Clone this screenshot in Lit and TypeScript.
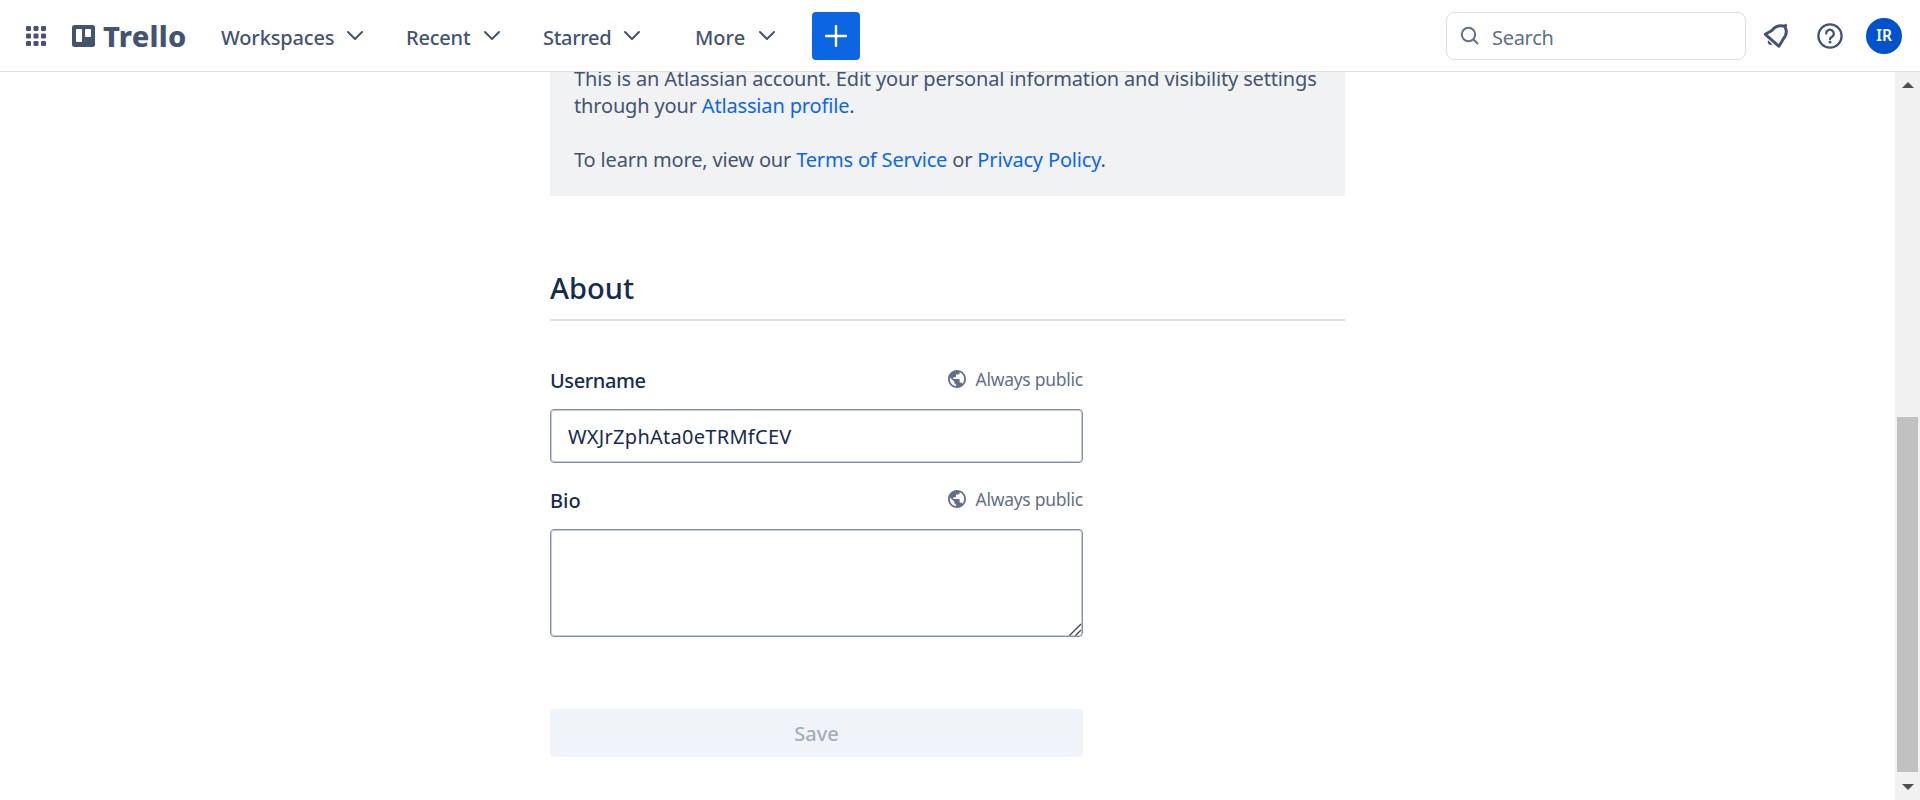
import { LitElement, html, css, svg } from "lit";
import { customElement } from "lit/decorators.js";

const chevron = html`<svg class="chev" viewBox="0 0 18 12" width="18" height="12"><path d="M2 2 L9 9 L16 2" fill="none" stroke="#44546f" stroke-width="2" stroke-linecap="round" stroke-linejoin="round"/></svg>`;

const globe = html`<svg class="globe" viewBox="2 2 20 20" width="18" height="18"><path fill="#626f86" d="M12 2C6.48 2 2 6.48 2 12s4.48 10 10 10 10-4.48 10-10S17.52 2 12 2zm-1 17.93c-3.95-.49-7-3.85-7-7.93 0-.62.08-1.21.21-1.79L9 15v1c0 1.1.9 2 2 2v1.93zm6.9-2.54c-.26-.81-1-1.39-1.9-1.39h-1v-3c0-.55-.45-1-1-1H8v-2h2c.55 0 1-.45 1-1V7h2c1.1 0 2-.9 2-2v-.41c2.93 1.19 5 4.06 5 7.41 0 2.08-.8 3.97-2.1 5.39z"/></svg>`;

@customElement("app-root")
export class AppRoot extends LitElement {
  static styles = css`
    :host { display: flex; flex-direction: column; width: 1920px; height: 800px; overflow: hidden; background: #fff; color: #172b4d; font: 20px/27px "Noto Sans", "Open Sans", sans-serif; box-sizing: border-box; }
    * { box-sizing: border-box; }
    svg { display: block; flex: none; }
    header { display: flex; align-items: center; height: 72px; flex: none; border-bottom: 1px solid #dcdfe4; padding: 0 18px 0 26px; color: #44546f; }
    .logo { display: flex; align-items: center; margin-left: 26px; width: 149px; }
    .word { font-size: 29px; font-weight: 800; line-height: 40px; margin: 1px 0 0 8px; letter-spacing: 0.25px; }
    nav { display: flex; align-items: center; font-weight: 500; }
    .item { display: flex; align-items: center; justify-content: space-between; white-space: nowrap; padding-top: 3px; }
    .chev { margin-top: -2px; }
    .workspaces { width: 143px; margin-right: 42px; letter-spacing: -0.15px; }
    .recent { width: 95px; margin-right: 42px; letter-spacing: -0.2px; }
    .starred { width: 98px; margin-right: 54px; letter-spacing: -0.3px; }
    .more { width: 81px; margin-right: 36px; }
    .plus { display: grid; place-items: center; width: 48px; height: 48px; border-radius: 4px; background: #0c66e4; }
    .search { display: flex; align-items: center; width: 300px; height: 48px; border: 1px solid #dcdfe4; border-radius: 8px; margin-left: auto; padding-left: 13px; color: #626f86; }
    .search span { margin: 3px 0 0 12px; letter-spacing: -0.3px; }
    .bell { margin-left: 17px; }
    .help { margin-left: 28px; }
    .avatar { display: grid; place-items: center; width: 36px; height: 36px; border-radius: 50%; background: #0052cc; color: #fff; font-size: 15.5px; font-weight: 600; margin-left: 23px; }
    .body { display: flex; flex: 1; min-height: 0; overflow: hidden; }
    main { flex: 1; padding-left: 550px; min-width: 0; }
    .panel { width: 795px; height: 131px; margin-top: -7px; background: #f1f2f4; padding: 0 24px; color: #44546f; white-space: nowrap; letter-spacing: -0.162px; }
    .panel p { margin: 0 0 27px; }
    .panel a { color: #0c66e4; }
    h3 { width: 795px; margin: 72px 0 0; height: 53px; border-bottom: 2px solid #dcdfe4; font-size: 29px; line-height: 40px; font-weight: 500; }
    .form { width: 533px; }
    .row { display: flex; justify-content: space-between; height: 42px; }
    .row.first { margin-top: 46px; }
    .row.second { margin-top: 24px; }
    .label { font-weight: 500; letter-spacing: -0.4px; }
    .second .label { letter-spacing: 0; }
    .public { display: flex; align-items: flex-start; font-size: 17.5px; line-height: 25px; color: #626f86; letter-spacing: -0.26px; }
    .globe { margin: 3px 9px 0 0; }
    .box { border: 1px solid #8590a2; box-shadow: inset 0 0 0 1px #c6ccd6; border-radius: 4px; width: 533px; }
    .input { height: 54px; padding: 13px 17px; letter-spacing: 0.27px; }
    .area { height: 108px; display: flex; align-items: flex-end; justify-content: flex-end; }
    .save { margin-top: 72px; height: 48px; border-radius: 4px; background: #f0f3f8; color: #a5adba; display: grid; place-items: center; font-weight: 500; }
    .scroll { width: 25px; background: #f1f1f1; display: flex; flex-direction: column; align-items: center; padding: 10px 0 10px; }
    .thumb { width: 21px; height: 355px; background: #c1c1c1; margin: 329px 0 auto; }
  `;

  private row(label: string, cls: string) {
    return html`<div class="row ${cls}"><span class="label">${label}</span><span class="public">${globe}<span class="ptext">Always public</span></span></div>`;
  }

  render() {
    return html`
      <header>
        <svg width="20" height="20" viewBox="0 0 20 20" fill="#44546f">${[0, 7.5, 15].map((x) => [0, 7.5, 15].map((y) => svg`<rect x=${x} y=${y} width="5" height="5" rx="1.2"/>`))}</svg>
        <div class="logo">
          <svg width="23" height="22" viewBox="0 0 23 22"><path fill="#44546f" fill-rule="evenodd" d="M2.500 0h18a2.500 2.500 0 0 1 2.500 2.500v17a2.500 2.500 0 0 1-2.500 2.500h-18a2.500 2.500 0 0 1-2.500-2.500v-17a2.500 2.500 0 0 1 2.500-2.500zM5 4a1 1 0 0 0-1 1v11a1 1 0 0 0 1 1h4a1 1 0 0 0 1-1V5a1 1 0 0 0-1-1zM14 4a1 1 0 0 0-1 1v6a1 1 0 0 0 1 1h4a1 1 0 0 0 1-1V5a1 1 0 0 0-1-1z"/></svg>
          <span class="word">Trello</span>
        </div>
        <nav>
          <div class="item workspaces">Workspaces${chevron}</div>
          <div class="item recent">Recent${chevron}</div>
          <div class="item starred">Starred${chevron}</div>
          <div class="item more">More${chevron}</div>
        </nav>
        <div class="plus"><svg width="22" height="22" viewBox="0 0 22 22"><path d="M11 1v20M1 11h20" stroke="#fff" stroke-width="2.400" stroke-linecap="round"/></svg></div>
        <div class="search">
          <svg width="20" height="20" viewBox="0 0 20 20" fill="none" stroke="#626f86" stroke-width="2"><circle cx="8.500" cy="8.500" r="6.700"/><path d="M13.300 13.300l4.700 4.700"/></svg>
          <span>Search</span>
        </div>
        <svg class="bell" width="26" height="26" viewBox="0 0 26 26" fill="none" stroke="#44546f" stroke-width="2.900" stroke-linejoin="round"><path d="M2.300 11.300 L8.500 7.800 C12.500 2.800 16.500 1.500 21.800 3.500 C24.700 8.500 23.500 12.500 19.800 16.700 L16 23.300 Z"/><path d="M20.500 3.500 L23.800 1.800"/><path d="M5 17.300 C3.800 20.500 6.500 23 9.500 21.500 Z" fill="#44546f" stroke="none"/></svg>
        <svg class="help" width="26" height="26" viewBox="0 0 26 26" fill="none" stroke="#44546f" stroke-width="2.300"><circle cx="13" cy="13" r="11.600"/><path d="M9.200 10.600a3.800 3.800 0 1 1 5.900 3.100c-1.500 1-2.100 1.200-2.100 2.500" stroke-linecap="round"/><circle cx="13" cy="19.200" r="1.400" fill="#44546f" stroke="none"/></svg>
        <div class="avatar">IR</div>
      </header>
      <div class="body">
        <main>
          <div class="panel">
            <p>This is an Atlassian account. Edit your personal information and visibility settings<br>through your <a>Atlassian profile</a>.</p>
            <p>To learn more, view our <a>Terms of Service</a> or <a>Privacy Policy</a>.</p>
          </div>
          <h3>About</h3>
          <div class="form">
            ${this.row("Username", "first")}
            <div class="box input">WXJrZphAta0eTRMfCEV</div>
            ${this.row("Bio", "second")}
            <div class="box area"><svg width="13" height="13" viewBox="0 0 13 13"><path d="M0.500 12.500L12 1M6.500 12.500L12 7" stroke="#444" stroke-width="1.300"/></svg></div>
            <div class="save">Save</div>
          </div>
        </main>
        <div class="scroll">
          <svg width="12" height="6" viewBox="0 0 12 6"><path d="M0 6L6 0L12 6z" fill="#505050"/></svg>
          <div class="thumb"></div>
          <svg width="12" height="6" viewBox="0 0 12 6"><path d="M0 0L6 6L12 0z" fill="#505050"/></svg>
        </div>
      </div>
    `;
  }
}
